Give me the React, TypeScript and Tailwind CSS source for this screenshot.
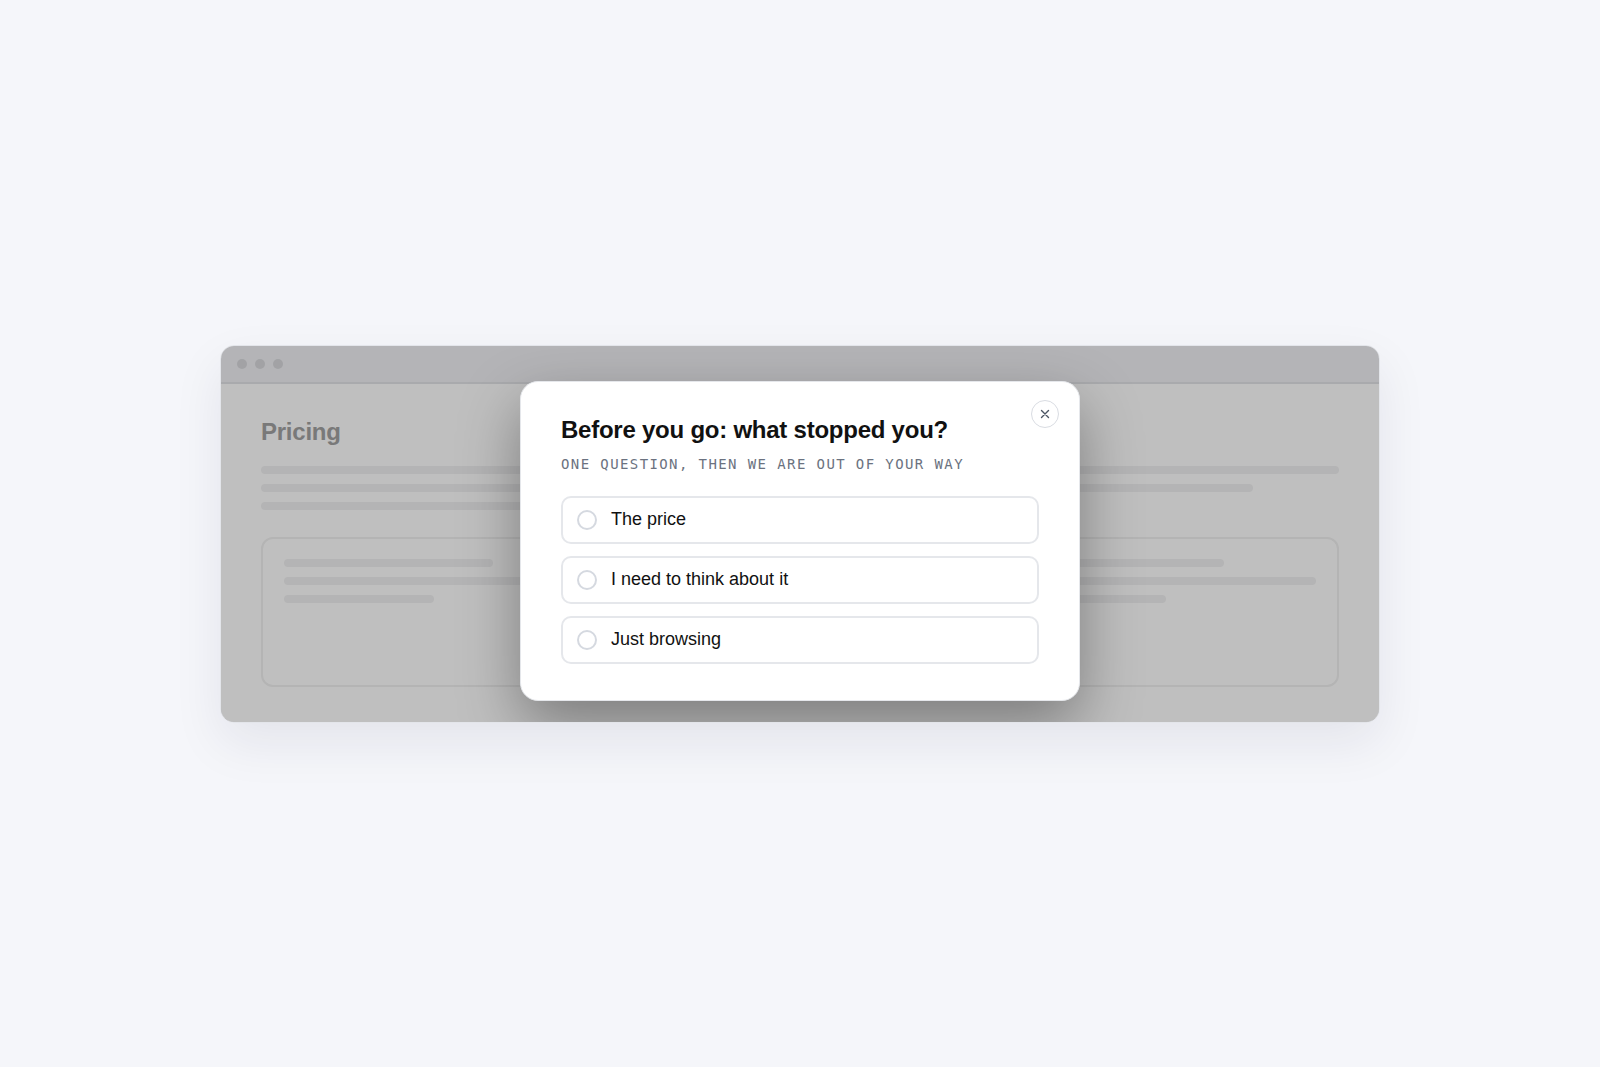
import React from "react";

const Line = ({ w }: { w: string }) => (
  <div className="h-2 rounded-full bg-[#f1f1f2]" style={{ width: w }} />
);

const options = ["The price", "I need to think about it", "Just browsing"];

export default function App() {
  return (
    <div
      className="min-h-[1067px] w-full bg-[#f5f6fa] flex items-center justify-center"
      style={{ fontFamily: '"Liberation Sans", Arial, sans-serif' }}
    >
      <div className="relative w-[1160px] h-[378px] rounded-[14px] border border-[#e3e5ea] bg-white shadow-[0_20px_50px_rgba(20,30,60,0.08)] overflow-hidden">
        {/* title bar */}
        <div className="h-[38px] bg-[#f0f1f5] border-b-2 border-[#e2e3e7] flex items-center gap-2 px-4">
          <div className="w-[10px] h-[10px] rounded-full bg-[#d8d9dd]" />
          <div className="w-[10px] h-[10px] rounded-full bg-[#d8d9dd]" />
          <div className="w-[10px] h-[10px] rounded-full bg-[#d8d9dd]" />
        </div>
        {/* page content */}
        <div className="px-10 pt-8">
          <div className="text-[24px] leading-8 font-bold text-[#a2a2a2] tracking-[-0.01em]">Pricing</div>
          <div className="mt-[18px] flex flex-col gap-[10px]">
            <Line w="100%" />
            <Line w="92%" />
            <Line w="60%" />
          </div>
          <div className="mt-[27px] grid grid-cols-2 gap-4">
            <div className="h-[150px] rounded-xl border-2 border-[#f0f0f0] px-[21px] pt-5 flex flex-col gap-[10px]">
              <Line w="43%" />
              <Line w="100%" />
              <Line w="31%" />
            </div>
            <div className="h-[150px] rounded-xl border-2 border-[#f0f0f0] px-[21px] pt-5 flex flex-col gap-[10px]">
              <Line w="81%" />
              <Line w="100%" />
              <Line w="69%" />
            </div>
          </div>
        </div>
        {/* dim overlay */}
        <div className="absolute inset-0 bg-black/25" />
        {/* modal */}
        <div className="absolute left-[299px] top-[35px] w-[560px] rounded-[18px] border border-[#e5e7eb] bg-white px-10 pt-8 pb-9 shadow-[0_24px_60px_rgba(0,0,0,0.35)]">
          <button className="absolute top-[18px] right-[20px] w-7 h-7 rounded-full border-[1.5px] border-[#d9dce2] bg-white flex items-center justify-center">
            <svg width="10" height="10" viewBox="0 0 10 10" fill="none">
              <path d="M1.5 1.5L8.5 8.5M8.5 1.5L1.5 8.5" stroke="#4b5563" strokeWidth="1.4" strokeLinecap="round" />
            </svg>
          </button>
          <h2 className="text-[24px] leading-8 font-bold text-[#111111] tracking-[-0.01em]">
            Before you go: what stopped you?
          </h2>
          <p
            className="mt-2 text-[14px] leading-5 tracking-[0.1em] text-[#6b7280] uppercase"
            style={{ fontFamily: '"DejaVu Sans Mono", "Liberation Mono", monospace' }}
          >
            One question, then we are out of your way
          </p>
          <div className="mt-[22px] flex flex-col gap-3">
            {options.map((o) => (
              <label
                key={o}
                className="h-12 rounded-[10px] border-2 border-[#e5e7eb] bg-white px-[14px] flex items-center gap-[14px] cursor-pointer"
              >
                <span className="w-5 h-5 rounded-full border-[2.5px] border-[#d5d9e0] shrink-0" />
                <span className="text-[18px] text-[#111111]">{o}</span>
              </label>
            ))}
          </div>
        </div>
      </div>
    </div>
  );
}
